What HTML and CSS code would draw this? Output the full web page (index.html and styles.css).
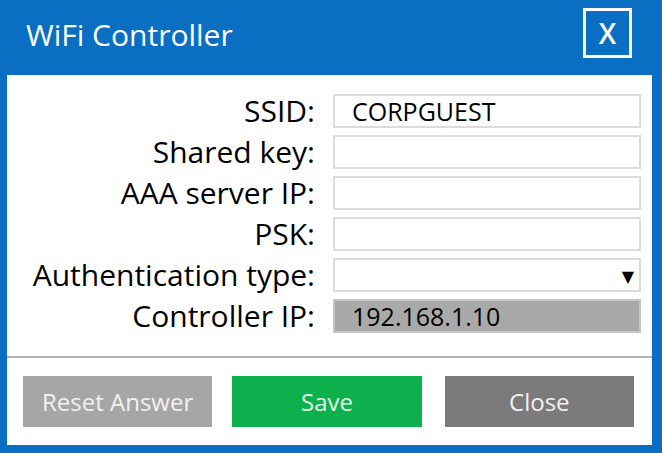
FILE: index.html
```html
<!DOCTYPE html>
<html lang="en">
<head>
    <meta charset="UTF-8">
    <title>WiFi Controller</title>
    <link rel="stylesheet" href="styles.css">
</head>
<body>

<div class="dialog">
    <div class="title-bar">
        <span class="title">WiFi Controller</span>
        <span class="close-x">X</span>
    </div>

    <div class="panel">
        <form class="fields">
            <label>SSID:</label>
            <div class="field">CORPGUEST</div>
            <label>Shared key:</label>
            <div class="field"></div>
            <label>AAA server IP:</label>
            <div class="field"></div>
            <label>PSK:</label>
            <div class="field"></div>
            <label>Authentication type:</label>
            <div class="field select"><span class="arrow">&#9660;</span></div>
            <label>Controller IP:</label>
            <div class="field readonly">192.168.1.10</div>
        </form>

        <div class="buttons">
            <div class="btn reset">Reset Answer</div>
            <div class="btn save">Save</div>
            <div class="btn close">Close</div>
        </div>
    </div>
</div>

</body>
</html>
```

FILE: styles.css
```css
body, html {
    margin: 0;
    height: 100%;
}
body {
    background: #0a6fc2;
    font-family: "Open Sans", "DejaVu Sans", sans-serif;
}
.dialog {
    display: flex;
    flex-direction: column;
    height: 453px;
    box-sizing: border-box;
    padding: 0 10px 8px 7px;
}
.title-bar {
    height: 75px;
    display: flex;
    align-items: center;
    justify-content: space-between;
    padding: 0 20px 0 19px;
    box-sizing: border-box;
}
.title {
    color: #ffffff;
    font-size: 30px;
    margin-top: -6px;
}
.close-x {
    width: 49px;
    height: 50px;
    box-sizing: border-box;
    border: 3px solid #ffffff;
    color: #ffffff;
    font-size: 28px;
    font-weight: 600;
    display: flex;
    align-items: center;
    justify-content: center;
    margin-top: -10px;
}
.panel {
    flex: 1;
    background: #ffffff;
    display: flex;
    flex-direction: column;
}
.fields {
    display: grid;
    grid-template-columns: 308px 308px;
    column-gap: 18px;
    row-gap: 7px;
    padding: 19px 0 23px 0;
    border-bottom: 2px solid #b4b4b4;
}
.fields label {
    text-align: right;
    font-size: 30px;
    line-height: 34px;
    color: #000000;
}
.field {
    height: 34px;
    box-sizing: border-box;
    border: 2px solid #dcdcdc;
    font-size: 25px;
    line-height: 30px;
    padding-left: 17px;
    color: #000000;
    position: relative;
}
.field.readonly {
    background: #a9a9a9;
    border-color: #c4c4c4;
}
.arrow {
    position: absolute;
    right: 5px;
    top: 1px;
    font-size: 16px;
    color: #000000;
}
.buttons {
    display: flex;
    gap: 20px;
    padding: 18px 18px 0 16px;
}
.btn {
    width: 190px;
    height: 51px;
    display: flex;
    align-items: center;
    justify-content: center;
    font-size: 24px;
    color: #f2f2f2;
}
.btn.reset {
    background: #a6a6a6;
}
.btn.save {
    background: #0cb04c;
    color: #e4fbe8;
    margin-right: 3px;
}
.btn.close {
    background: #7b7b7b;
}
```
